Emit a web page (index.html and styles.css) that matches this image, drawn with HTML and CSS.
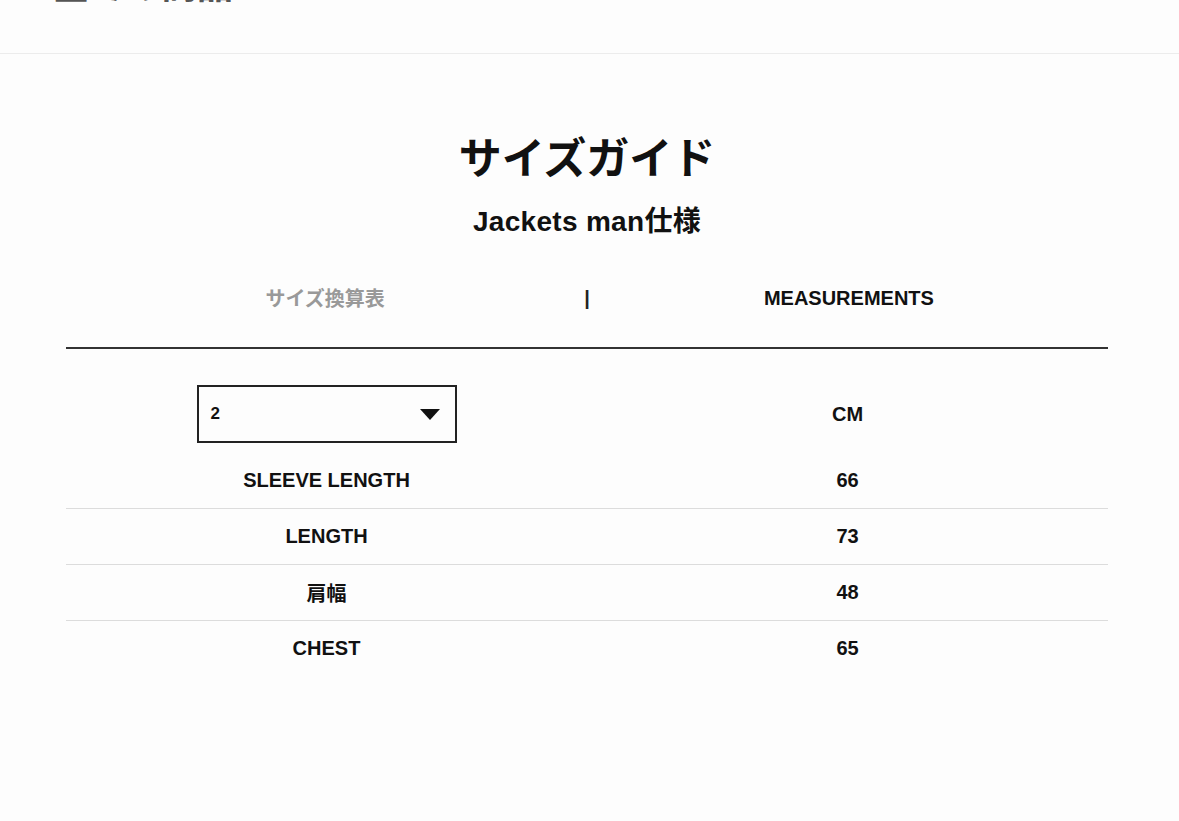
FILE: index.html
```html
<!DOCTYPE html>
<html lang="ja">
<head>
<meta charset="utf-8">
<title>サイズガイド</title>
<link rel="stylesheet" href="styles.css">
</head>
<body>
<header class="top">
  <div class="brand">全ての商品</div>
</header>
<main class="guide">
  <h1 class="title">サイズガイド</h1>
  <h2 class="subtitle">Jackets man仕様</h2>
  <nav class="tabs">
    <div class="tab tab-muted">サイズ換算表</div>
    <div class="tab-sep">|</div>
    <div class="tab tab-active">MEASUREMENTS</div>
  </nav>
  <div class="sel-row">
    <div class="cell">
      <div class="dropdown">
        <span class="dd-value">2</span>
        <svg class="dd-arrow" width="20" height="11" viewBox="0 0 20 11"><path d="M0 0H20L10 11Z" fill="#111"/></svg>
      </div>
    </div>
    <div class="cell unit">CM</div>
  </div>
  <div class="row"><div class="cell">SLEEVE LENGTH</div><div class="cell">66</div></div>
  <div class="row"><div class="cell">LENGTH</div><div class="cell">73</div></div>
  <div class="row"><div class="cell">肩幅</div><div class="cell">48</div></div>
  <div class="row last"><div class="cell">CHEST</div><div class="cell">65</div></div>
</main>
</body>
</html>
```
FILE: styles.css
```css
html, body {
  margin: 0;
  padding: 0;
  background: #fdfdfd;
  color: #111;
  font-family: "Liberation Sans", Arial, "Noto Sans CJK JP", sans-serif;
}

.top {
  height: 53px;
  border-bottom: 1px solid #ececec;
  overflow: hidden;
  padding-left: 53px;
}

.brand {
  font: 700 36px/36px "Noto Sans CJK JP", sans-serif;
  color: #555;
  margin-top: -35px;
}

.guide {
  width: 1042px;
  margin-left: 66px;
  padding-top: 76px;
}

.title {
  margin: 0;
  text-align: center;
  font: 700 43px/50px "Noto Sans CJK JP", sans-serif;
  color: #111;
}

.subtitle {
  margin: 25px 0 0;
  text-align: center;
  font: 700 28px/34px "Liberation Sans", Arial, "Noto Sans CJK JP", sans-serif;
  letter-spacing: 0.3px;
  color: #111;
}

.tabs {
  margin-top: 47px;
  padding-bottom: 37px;
  border-bottom: 2px solid #333;
  display: grid;
  grid-template-columns: 1fr auto 1fr;
  align-items: center;
  font-weight: 700;
  font-size: 20px;
  line-height: 24px;
}

.tab {
  text-align: center;
}

.tab-muted {
  color: #999;
  font-family: "Noto Sans CJK JP", sans-serif;
  font-size: 20px;
}

.tab-sep {
  color: #222;
  font-size: 20px;
}

.tab-active {
  color: #111;
}

.sel-row,
.row {
  display: grid;
  grid-template-columns: 1fr 1fr;
  align-items: center;
}

.sel-row {
  padding-top: 36px;
  padding-bottom: 10px;
}

.row {
  height: 55px;
  border-bottom: 1px solid #dcdcdc;
}

.row.last {
  border-bottom: none;
}

.cell {
  display: flex;
  justify-content: center;
  font-weight: 700;
  font-size: 20px;
  color: #111;
}

.dropdown {
  box-sizing: border-box;
  width: 260px;
  height: 58px;
  border: 2px solid #222;
  display: flex;
  align-items: center;
  justify-content: space-between;
  padding: 0 15px 0 12px;
}

.dd-value {
  font-size: 17px;
  font-weight: 700;
}

.dd-arrow {
  display: block;
}
```
